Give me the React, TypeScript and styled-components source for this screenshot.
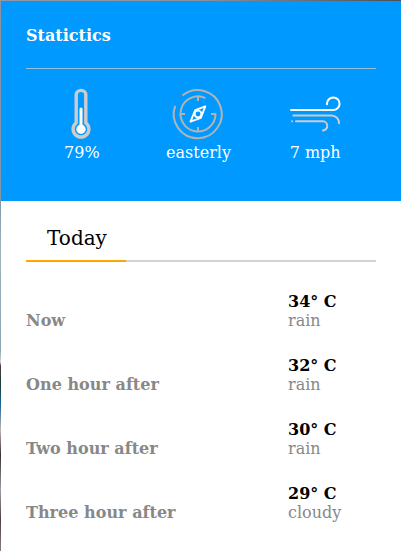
import React from "react";
import styled, { createGlobalStyle } from "styled-components";

const GlobalStyle = createGlobalStyle`
  * { box-sizing: border-box; }
  body {
    margin: 0;
    font-family: "DejaVu Serif", serif;
    font-size: 16px;
    line-height: 19px;
    overflow: hidden;
  }
`;

const Backdrop = styled.main`
  height: 551px;
  padding: 1px 0 0 1px;
  background:
    linear-gradient(90deg, #9298a4 0%, #8d929c 50%, #4c4f55 100%) 0 0 / 100% 1px no-repeat,
    linear-gradient(#8d949f 0, #7f98a8 200px, #9eb3bd 250px, #8ba6b4 350px,
      #d5d8d9 362px, #493c3e 366px, #173f36 385px, #1c649a 405px,
      #c4b5af 430px, #393036 455px, #a29ba7 490px, #4b4145 520px, #8c7c7b 551px);
`;

const Panel = styled.section`
  width: 400px;
  height: 550px;
  background: #fff;
`;

const Statistics = styled.header`
  height: 200px;
  padding: 25px 25px 0;
  background: #0099ff;
  color: #fff;
`;

const Title = styled.h1`
  height: 43px;
  margin: 0;
  padding-bottom: 23px;
  border-bottom: 1px solid #94c4dd;
  font-size: 16px;
  line-height: 19px;
`;

const Metrics = styled.div`
  display: grid;
  grid-template-columns: repeat(3, 116.67px);
  margin: 20px 0 0 -3px;
`;

const Metric = styled.div`
  display: flex;
  flex-direction: column;
  align-items: center;
  gap: 4px;
`;

const MetricLabel = styled.span`
  padding-left: 1px;
`;

const Icon = styled.svg`
  width: 50px;
  height: 50px;
  fill: none;
  overflow: visible;
  stroke-linecap: round;
  stroke-linejoin: round;
`;

const Forecast = styled.section`
  padding: 0 25px;
`;

const Tabs = styled.nav`
  display: flex;
  height: 61px;
  border-bottom: 2px solid #d3d3d3;
`;

const Tab = styled.div`
  width: 100px;
  height: 61px;
  padding: 25px 0 0 2px;
  border-bottom: 2px solid orange;
  color: #000;
  font-size: 20px;
  line-height: 24px;
  text-align: center;
`;

const Hours = styled.div`
  display: flex;
  flex-direction: column;
  gap: 26px;
  padding-top: 30px;
`;

const Hour = styled.div`
  display: grid;
  grid-template-columns: 262px 88px;
  align-items: end;
  color: #888;
`;

const Time = styled.div`
  font-weight: bold;
  letter-spacing: 0.03px;
`;

const Temperature = styled.div`
  color: #000;
  font-weight: bold;
`;

const Thermometer = () => (
  <Icon viewBox="0 0 50 50">
    <path d="M20.2 33.9V6.2a4.8 4.8 0 0 1 9.6 0v27.7a7.9 7.9 0 1 1-9.6 0Z" stroke="#ccc" strokeWidth="3.4" />
    <path d="M25 20v20" stroke="#fff" strokeWidth="3" />
    <circle cx="25" cy="40.3" r="4.7" fill="#fff" />
  </Icon>
);

const Compass = () => (
  <Icon viewBox="0 0 50 50">
    <g stroke="#b3b3b3" strokeWidth="2" strokeLinecap="butt">
      <path d="M9.5 6.6A24 24 0 1 1 2.2 16.9" />
      <path d="M32.5 9.1A17.5 17.5 0 1 0 42.5 25H38" />
      <path d="M25 7.5V12M7.5 25H12M25 42.5V38" />
    </g>
    <g stroke="#fff" strokeWidth="1.9">
      <path d="M32.3 17.3L22.2 21.2L17.5 32.7L27.8 28.8Z" />
      <circle cx="25" cy="25" r="3.4" />
    </g>
  </Icon>
);

const Wind = () => (
  <Icon viewBox="0 0 50 50">
    <path d="M1 21H42.5A6.3 6.3 0 1 0 37 15.2" stroke="#fff" strokeWidth="2" />
    <g stroke="#ccc" strokeWidth="2">
      <path d="M3.3 26.5H41.5A7.5 7.5 0 0 1 49 34.3" />
      <path d="M6 32.3H32.4A4.6 4.6 0 0 1 32.9 41.5M2 32.3h.01" />
    </g>
  </Icon>
);

const metrics = [
  { icon: <Thermometer />, label: "79%" },
  { icon: <Compass />, label: "easterly" },
  { icon: <Wind />, label: "7 mph" },
];

const hours = [
  { time: "Now", temperature: 34, weather: "rain" },
  { time: "One hour after", temperature: 32, weather: "rain" },
  { time: "Two hour after", temperature: 30, weather: "rain" },
  { time: "Three hour after", temperature: 29, weather: "cloudy" },
];

export default function App() {
  return (
    <Backdrop>
      <GlobalStyle />
      <Panel>
        <Statistics>
          <Title>Statictics</Title>
          <Metrics>
            {metrics.map(({ icon, label }) => (
              <Metric key={label}>
                {icon}
                <MetricLabel>{label}</MetricLabel>
              </Metric>
            ))}
          </Metrics>
        </Statistics>
        <Forecast>
          <Tabs>
            <Tab>Today</Tab>
          </Tabs>
          <Hours>
            {hours.map(({ time, temperature, weather }) => (
              <Hour key={time}>
                <Time>{time}</Time>
                <div>
                  <Temperature>{temperature}° C</Temperature>
                  <div>{weather}</div>
                </div>
              </Hour>
            ))}
          </Hours>
        </Forecast>
      </Panel>
    </Backdrop>
  );
}
